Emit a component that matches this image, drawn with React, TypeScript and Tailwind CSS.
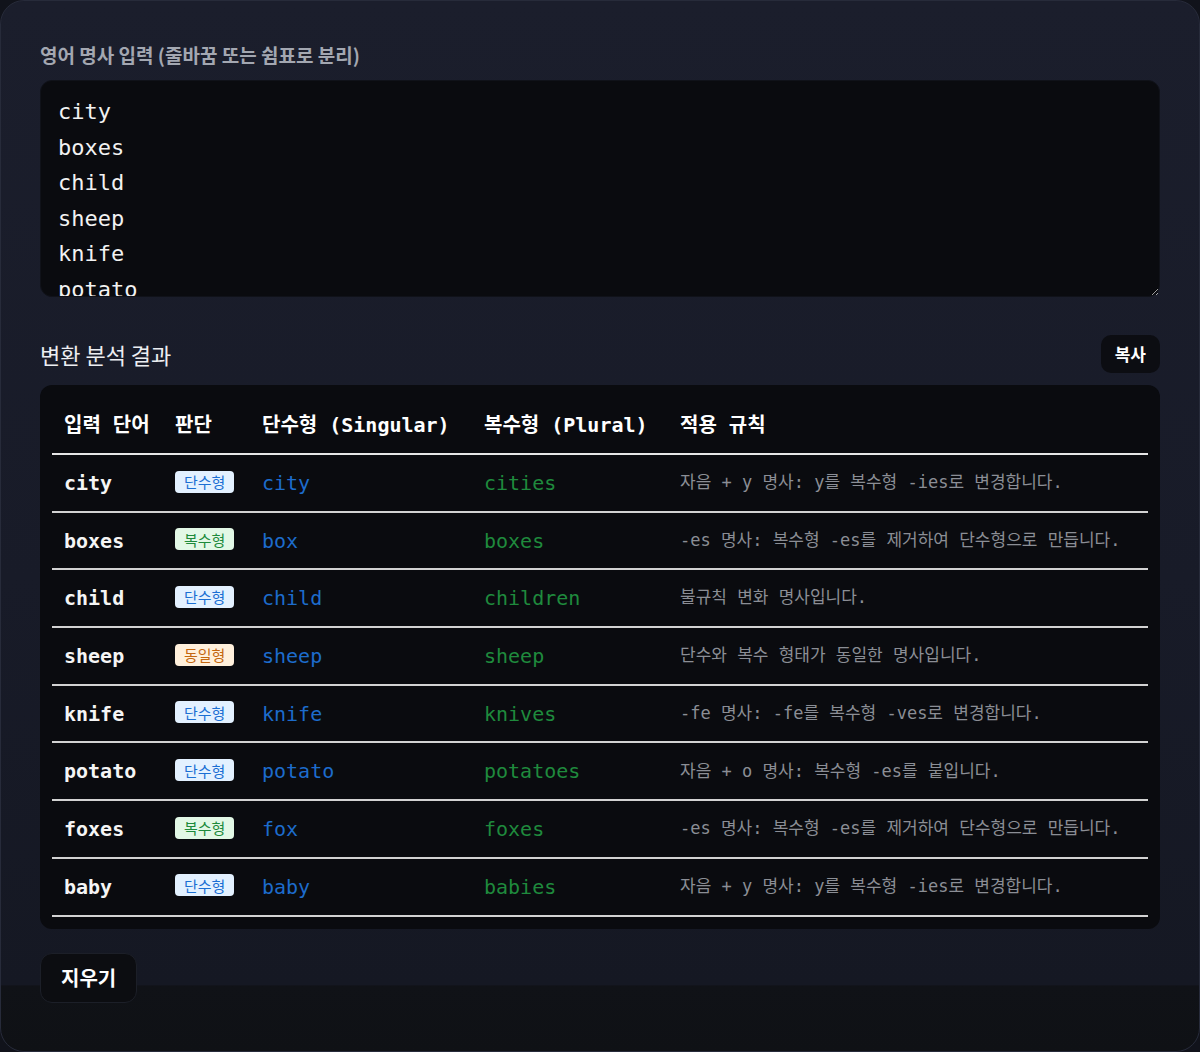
import { useState } from 'react';

type Kind = 'singular' | 'plural' | 'same';

type Row = {
  word: string;
  kind: Kind;
  singular: string;
  plural: string;
  rule: string;
};

const ROWS: Row[] = [
  { word: 'city', kind: 'singular', singular: 'city', plural: 'cities', rule: '자음 + y 명사: y를 복수형 -ies로 변경합니다.' },
  { word: 'boxes', kind: 'plural', singular: 'box', plural: 'boxes', rule: '-es 명사: 복수형 -es를 제거하여 단수형으로 만듭니다.' },
  { word: 'child', kind: 'singular', singular: 'child', plural: 'children', rule: '불규칙 변화 명사입니다.' },
  { word: 'sheep', kind: 'same', singular: 'sheep', plural: 'sheep', rule: '단수와 복수 형태가 동일한 명사입니다.' },
  { word: 'knife', kind: 'singular', singular: 'knife', plural: 'knives', rule: '-fe 명사: -fe를 복수형 -ves로 변경합니다.' },
  { word: 'potato', kind: 'singular', singular: 'potato', plural: 'potatoes', rule: '자음 + o 명사: 복수형 -es를 붙입니다.' },
  { word: 'foxes', kind: 'plural', singular: 'fox', plural: 'foxes', rule: '-es 명사: 복수형 -es를 제거하여 단수형으로 만듭니다.' },
  { word: 'baby', kind: 'singular', singular: 'baby', plural: 'babies', rule: '자음 + y 명사: y를 복수형 -ies로 변경합니다.' },
];

const BADGE: Record<Kind, { label: string; cls: string }> = {
  singular: { label: '단수형', cls: 'bg-[#e3f1ff] text-[#1b6fd3]' },
  plural: { label: '복수형', cls: 'bg-[#e2f8e6] text-[#1d8a3b]' },
  same: { label: '동일형', cls: 'bg-[#fff0dc] text-[#c4670f]' },
};

const sans = 'font-["Noto_Sans_CJK_KR","Noto_Sans",sans-serif]';
const mono = 'font-["DejaVu_Sans_Mono","Noto_Sans_CJK_KR",monospace]';

function Badge({ kind }: { kind: Kind }) {
  const b = BADGE[kind];
  return (
    <span className={`inline-flex h-[22px] items-center rounded-[4px] px-[9px] text-[15px] leading-none ${sans} ${b.cls}`}>
      {b.label}
    </span>
  );
}

export default function App() {
  const [text, setText] = useState(ROWS.map((r) => r.word).join('\n'));

  return (
    <div className="min-h-screen bg-[#11131b]">
      <div
        className={`flex min-h-screen flex-col rounded-[24px] border border-[#272b3a] bg-[linear-gradient(180deg,#1b1e2c_0%,#181b28_55%,#151823_93.7%,#101217_93.8%,#0f1115_100%)] px-[39px] pt-[40px] ${sans}`}
      >
        <label className="mb-3 text-[19px] font-semibold leading-[27px] text-[#a3a7b1]">
          영어 명사 입력 (줄바꿈 또는 쉼표로 분리)
        </label>
        <textarea
          value={text}
          onChange={(e) => setText(e.target.value)}
          spellCheck={false}
          className={`h-[217px] w-full overflow-hidden rounded-[12px] border border-[#101219] bg-[#0a0b0f] px-[17px] pt-[13px] text-[22px] leading-[35.5px] text-[#f2f2f2] outline-none ${mono}`}
        />

        <div className="mt-[38px] flex items-center justify-between">
          <h2 className="text-[22px] leading-[30px] text-[#eceef2]">변환 분석 결과</h2>
          <button className="h-[38px] rounded-[10px] bg-[#0c0d12] px-[14px] text-[17px] font-bold text-white">
            복사
          </button>
        </div>

        <div className="mt-3 rounded-[12px] bg-[#0a0b0f] p-3">
          <table className={`w-full table-fixed border-collapse ${mono}`}>
            <colgroup>
              <col className="w-[111px]" />
              <col className="w-[87px]" />
              <col className="w-[222px]" />
              <col className="w-[196px]" />
              <col />
            </colgroup>
            <thead>
              <tr className="h-[57px] border-b-2 border-[#e6e6e6] text-left text-[20px] font-bold text-white">
                <th className="px-3 font-bold">입력 단어</th>
                <th className="px-3 font-bold">판단</th>
                <th className="px-3 font-bold">단수형 (Singular)</th>
                <th className="px-3 font-bold">복수형 (Plural)</th>
                <th className="px-3 font-bold">적용 규칙</th>
              </tr>
            </thead>
            <tbody>
              {ROWS.map((r) => (
                <tr key={r.word} className="h-[57.7px] border-b-2 border-[#d2d2d2]">
                  <td className="px-3 text-[20px] font-bold text-[#f5f5f5]">{r.word}</td>
                  <td className="px-3">
                    <Badge kind={r.kind} />
                  </td>
                  <td className="px-3 text-[20px] text-[#1d6ccc]">{r.singular}</td>
                  <td className="px-3 text-[20px] text-[#1f8a3d]">{r.plural}</td>
                  <td className="whitespace-nowrap px-3 text-[17px] text-[#8b8e95]">{r.rule}</td>
                </tr>
              ))}
            </tbody>
          </table>
        </div>

        <div className="mt-[24px]">
          <button
            onClick={() => setText('')}
            className="h-[50px] rounded-[12px] border border-[#1c1f28] bg-[#0c0d11] px-[20px] text-[20px] font-bold text-white"
          >
            지우기
          </button>
        </div>
      </div>
    </div>
  );
}
